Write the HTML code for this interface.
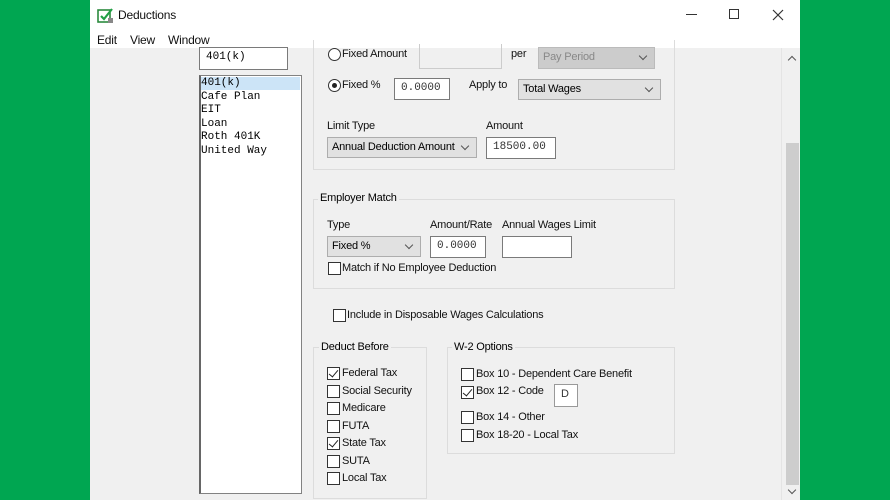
<!DOCTYPE html>
<html><head><meta charset="utf-8"><style>
*{box-sizing:border-box;margin:0;padding:0}
body{width:890px;height:500px;background:#00a651;position:relative;overflow:hidden;font-family:"Liberation Sans",sans-serif;font-size:11px;color:#000}
.a{position:absolute}
.win{left:90px;top:0;width:710px;height:500px;background:#f0f0f0}
.tb{left:90px;top:0;width:710px;height:48px;background:#fff}
.t{position:absolute;white-space:nowrap;letter-spacing:-0.2px;color:#111}
.inp{position:absolute;background:#fff;border:1px solid #7a7a7a;font-family:"Liberation Mono",monospace;font-size:11px;padding:3px 0 0 6px;color:#333}
.sel{position:absolute;background:#e1e1e1;border:1px solid #adadad;padding:3px 0 0 4px;white-space:nowrap;letter-spacing:-0.2px}
.sel:after{content:"";position:absolute;right:8px;top:5px;width:5px;height:5px;border-right:1px solid #555;border-bottom:1px solid #555;transform:rotate(45deg)}
.grp{position:absolute;border:1px solid #dcdcdc}
.gl{position:absolute;background:#f0f0f0;padding:0 2px;white-space:nowrap;letter-spacing:-0.2px}
.cb{position:absolute;width:13px;height:13px;border:1px solid #333;background:#fff}
.ck:after{content:"";position:absolute;left:3px;top:0px;width:4px;height:8px;border-right:1.5px solid #222;border-bottom:1.5px solid #222;transform:rotate(40deg)}
.rd{position:absolute;width:13px;height:13px;border:1px solid #333;border-radius:50%;background:#fff}
.chev{position:absolute;width:6px;height:6px;border-left:1.5px solid #555;border-top:1.5px solid #555}
</style></head><body>
<div class="a win"></div>
<div class="a tb"></div>
<svg class="a" style="left:97px;top:7px" width="18" height="17" viewBox="0 0 18 17"><rect x="1" y="3" width="12" height="12" fill="none" stroke="#2b8a3e" stroke-width="1.6"/><path d="M4 9l3 3 8-10" fill="none" stroke="#22a046" stroke-width="2.2"/><rect x="11" y="11" width="5" height="5" fill="#888"/></svg>
<div class="t" style="left:118px;top:8px;font-size:12px">Deductions</div>
<div class="t" style="left:97px;top:33px;font-size:12px">Edit</div>
<div class="t" style="left:130px;top:33px;font-size:12px">View</div>
<div class="t" style="left:168px;top:33px;font-size:12px">Window</div>
<div class="a" style="left:686px;top:14px;width:11px;height:1px;background:#333"></div>
<div class="a" style="left:729px;top:9px;width:10px;height:10px;border:1px solid #333"></div>
<svg class="a" style="left:772px;top:9px" width="12" height="12"><path d="M1 1L11 11M11 1L1 11" stroke="#333" stroke-width="1.2"/></svg>
<div class="a" style="left:784px;top:48px;width:16px;height:452px;background:#f0f0f0"></div>
<div class="a" style="left:786px;top:143px;width:13px;height:342px;background:#cdcdcd"></div>
<div class="chev" style="left:789px;top:57px;transform:rotate(45deg)"></div>
<div class="chev" style="left:789px;top:487px;transform:rotate(225deg)"></div>
<div class="a" style="left:781px;top:48px;width:1px;height:452px;background:#e4e4e4"></div>
<div class="inp" style="left:199px;top:47px;width:89px;height:23px;color:#000">401(k)</div>
<div class="a" style="left:199px;top:75px;width:103px;height:419px;background:#fff;border:1px solid #828282;border-left:2px solid #666"></div>
<div class="a" style="left:201px;top:77px;width:99px;height:13px;background:#cce4f7"></div>
<div class="a" style="left:201px;top:77px;font-family:'Liberation Mono',monospace;font-size:11px;line-height:13.5px;white-space:pre">401(k)
Cafe Plan
EIT
Loan
Roth 401K
United Way</div>
<div class="grp" style="left:313px;top:40px;width:362px;height:130px;border-top:none"></div>
<div class="rd" style="left:328px;top:48px"></div>
<div class="t" style="left:342px;top:48px">Fixed Amount</div>
<div class="a" style="left:419px;top:44px;width:83px;height:25px;border:1px solid #ccc;border-top:none"></div>
<div class="t" style="left:511px;top:48px">per</div>
<div class="sel" style="left:538px;top:47px;width:117px;height:22px;background:#ccc;border-color:#bbb;color:#888">Pay Period</div>
<div class="rd" style="left:328px;top:79px"><div class="a" style="left:3px;top:3px;width:5px;height:5px;border-radius:50%;background:#222"></div></div>
<div class="t" style="left:342px;top:79px">Fixed %</div>
<div class="inp" style="left:394px;top:78px;width:56px;height:22px">0.0000</div>
<div class="t" style="left:469px;top:79px">Apply to</div>
<div class="sel" style="left:518px;top:79px;width:143px;height:21px">Total Wages</div>
<div class="t" style="left:327px;top:120px">Limit Type</div>
<div class="sel" style="left:327px;top:137px;width:150px;height:21px">Annual Deduction Amount</div>
<div class="t" style="left:486px;top:120px">Amount</div>
<div class="inp" style="left:486px;top:137px;width:70px;height:22px">18500.00</div>
<div class="grp" style="left:313px;top:199px;width:362px;height:90px"></div>
<div class="gl" style="left:318px;top:192px">Employer Match</div>
<div class="t" style="left:327px;top:219px">Type</div>
<div class="sel" style="left:327px;top:236px;width:94px;height:21px">Fixed %</div>
<div class="t" style="left:430px;top:219px">Amount/Rate</div>
<div class="inp" style="left:430px;top:236px;width:56px;height:22px">0.0000</div>
<div class="t" style="left:502px;top:219px">Annual Wages Limit</div>
<div class="inp" style="left:502px;top:236px;width:70px;height:22px"></div>
<div class="cb" style="left:328px;top:262px"></div>
<div class="t" style="left:342px;top:262px">Match if No Employee Deduction</div>
<div class="cb" style="left:333px;top:309px"></div>
<div class="t" style="left:347px;top:309px">Include in Disposable Wages Calculations</div>
<div class="grp" style="left:313px;top:347px;width:114px;height:152px"></div>
<div class="gl" style="left:319px;top:341px">Deduct Before</div>
<div class="cb ck" style="left:327px;top:367px"></div><div class="t" style="left:342px;top:367px">Federal Tax</div>
<div class="cb" style="left:327px;top:385px"></div><div class="t" style="left:342px;top:385px">Social Security</div>
<div class="cb" style="left:327px;top:402px"></div><div class="t" style="left:342px;top:402px">Medicare</div>
<div class="cb" style="left:327px;top:420px"></div><div class="t" style="left:342px;top:420px">FUTA</div>
<div class="cb ck" style="left:327px;top:437px"></div><div class="t" style="left:342px;top:437px">State Tax</div>
<div class="cb" style="left:327px;top:455px"></div><div class="t" style="left:342px;top:455px">SUTA</div>
<div class="cb" style="left:327px;top:472px"></div><div class="t" style="left:342px;top:472px">Local Tax</div>
<div class="grp" style="left:447px;top:347px;width:228px;height:107px"></div>
<div class="gl" style="left:452px;top:341px">W-2 Options</div>
<div class="cb" style="left:461px;top:368px"></div><div class="t" style="left:476px;top:368px">Box 10 - Dependent Care Benefit</div>
<div class="cb ck" style="left:461px;top:386px"></div><div class="t" style="left:476px;top:385px">Box 12 - Code</div>
<div class="inp" style="left:554px;top:384px;width:24px;height:23px;font-family:'Liberation Sans',sans-serif;border-color:#999">D</div>
<div class="cb" style="left:461px;top:411px"></div><div class="t" style="left:476px;top:411px">Box 14 - Other</div>
<div class="cb" style="left:461px;top:429px"></div><div class="t" style="left:476px;top:429px">Box 18-20 - Local Tax</div>
</body></html>
